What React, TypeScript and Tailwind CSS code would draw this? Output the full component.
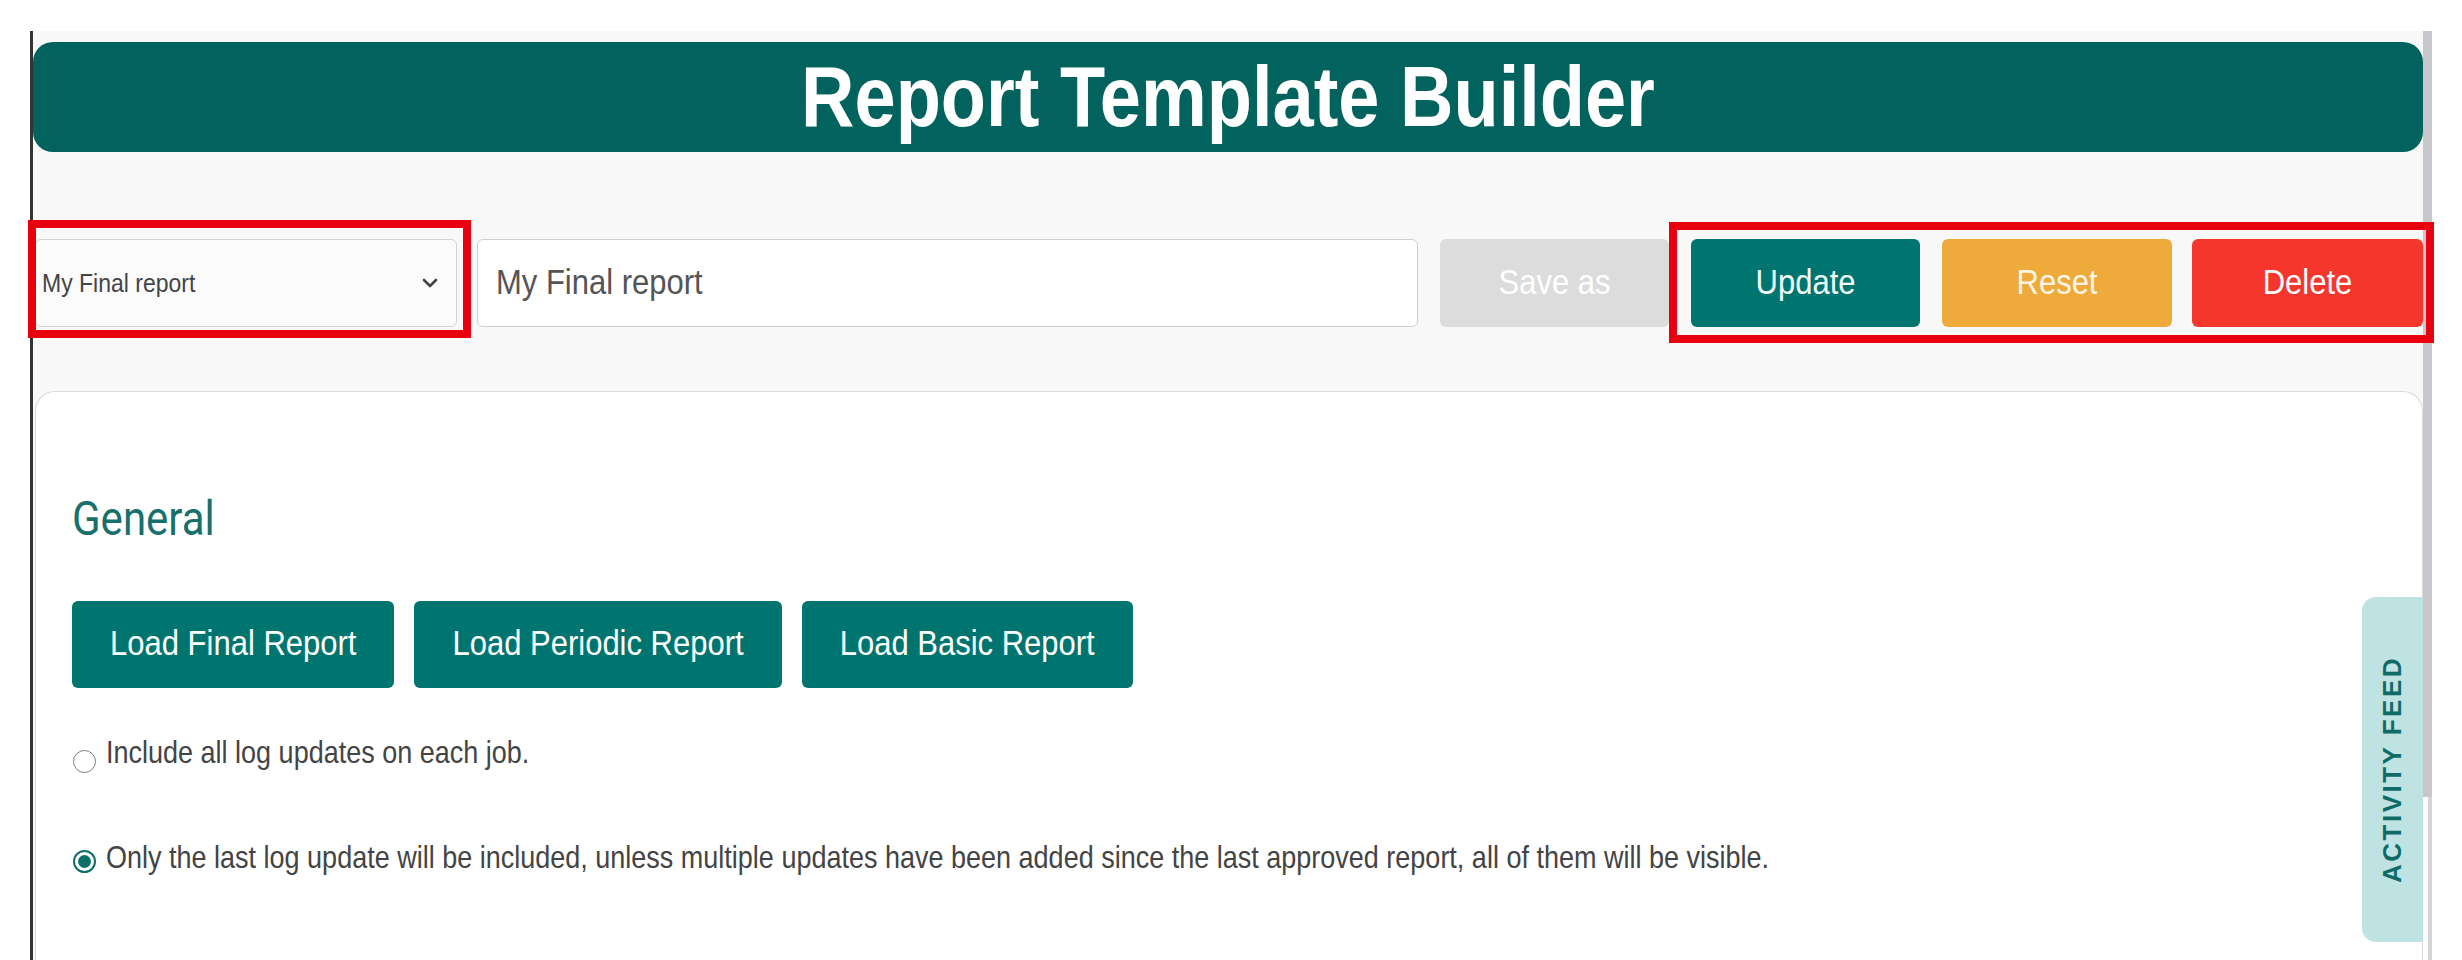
import { ChevronDown } from "lucide-react";

const tall = "inline-block scale-y-[1.15]";

type RadioProps = {
  checked?: boolean;
  label: string;
  className?: string;
  dotOffset: string;
};

function RadioOption({ checked = false, label, className = "", dotOffset }: RadioProps) {
  return (
    <label className={`flex items-start ${className}`}>
      <span
        className={`ml-[1px] flex h-[23px] w-[23px] shrink-0 items-center justify-center rounded-full bg-white ${dotOffset} ${
          checked ? "border-2 border-[#0e6e69]" : "border-[1.5px] border-[#7d7d7d]"
        }`}
      >
        {checked ? <span className="h-[13px] w-[13px] rounded-full bg-[#0e6e69]" /> : null}
      </span>
      <span className={`ml-[10px] text-[27px] leading-[30px] text-[#444] ${tall}`}>{label}</span>
    </label>
  );
}

function LoadButton({ label }: { label: string }) {
  return (
    <button className="h-[87px] rounded-[6px] bg-[#00756f] px-[38px] text-[31px] text-white">
      <span className={tall}>{label}</span>
    </button>
  );
}

export default function App() {
  return (
    <div className="h-[960px] overflow-hidden bg-white font-['Liberation_Sans',Arial,sans-serif]">
      <div className="ml-[30px] mt-[31px] flex h-[929px] w-[2402px]">
        <div className="w-[3px] shrink-0 bg-[#333]" />

        <main className="relative w-[2390px] shrink-0 bg-[#f8f8f8]">
          <header className="mt-[11px] flex h-[110px] items-center justify-center rounded-[20px] bg-[#02625e]">
            <h1 className={`text-[74px] font-bold leading-none text-white ${tall}`}>Report Template Builder</h1>
          </header>

          {/* template picker + actions */}
          <div className="mt-[87px] flex h-[88px]">
            <div className="relative ml-[2px] w-[422px] shrink-0">
              <div className="flex h-full items-center justify-between rounded-[6px] border border-[#d2d2d2] bg-[#fbfbfb] pl-[6px] pr-[14px] text-[23px] text-[#444]">
                <span className={tall}>My Final report</span>
                <ChevronDown size={24} strokeWidth={2.6} className="text-[#444]" />
              </div>
              <div className="pointer-events-none absolute bottom-[-11px] left-[-7px] right-[-14px] top-[-19px] border-[8px] border-[#e8000f]" />
            </div>

            <div className="ml-[20px] flex w-[941px] shrink-0 items-center rounded-[6px] border border-[#cfcfcf] bg-white pl-[18px] text-[31px] text-[#555]">
              <span className={tall}>My Final report</span>
            </div>

            <button className="ml-[22px] w-[229px] shrink-0 rounded-[6px] bg-[#dcdcdc] text-[31px] text-white">
              <span className={tall}>Save as</span>
            </button>

            <div className="relative ml-[22px] flex shrink-0">
              <button className="w-[229px] rounded-[6px] bg-[#00756f] text-[31px] text-[#f0fbfa]">
                <span className={tall}>Update</span>
              </button>
              <button className="ml-[22px] w-[230px] rounded-[6px] bg-[#eeab3c] text-[31px] text-[#fdf6e6]">
                <span className={tall}>Reset</span>
              </button>
              <button className="ml-[20px] w-[231px] rounded-[6px] bg-[#f4362c] text-[31px] text-white">
                <span className={tall}>Delete</span>
              </button>
              <div className="pointer-events-none absolute bottom-[-16px] left-[-22px] right-[-11px] top-[-17px] border-[8px] border-[#e8000f]" />
            </div>
          </div>

          <section className="ml-[2px] mt-[64px] h-[600px] w-[2388px] rounded-t-[20px] border border-b-0 border-[#dadada] bg-white pl-[36px] pt-[103px]">
            <h2 className={`font-['Roboto',sans-serif] text-[42px] leading-[48px] text-[#17706b] ${tall}`}>General</h2>

            <div className="mt-[58px] flex gap-[20px]">
              <LoadButton label="Load Final Report" />
              <LoadButton label="Load Periodic Report" />
              <LoadButton label="Load Basic Report" />
            </div>

            <RadioOption className="mt-[50px]" dotOffset="mt-[12px]" label="Include all log updates on each job." />
            <RadioOption
              checked
              className="mt-[70px]"
              dotOffset="mt-[7px]"
              label="Only the last log update will be included, unless multiple updates have been added since the last approved report, all of them will be visible."
            />
          </section>

          {/* side tab */}
          <div className="absolute right-0 top-[566px] flex h-[345px] w-[61px] items-center justify-center rounded-l-[14px] bg-[#bfe3e3]">
            <span className="-rotate-90 whitespace-nowrap text-[26px] font-bold tracking-[2.5px] text-[#0f6b67]">
              ACTIVITY FEED
            </span>
          </div>
        </main>

        <div className="flex w-[9px] shrink-0 flex-col">
          <div className="h-[766px] bg-[#c7c7cb]" />
          <div className="ml-auto w-[4px] flex-1 bg-[#d4d4d8]" />
        </div>
      </div>
    </div>
  );
}
